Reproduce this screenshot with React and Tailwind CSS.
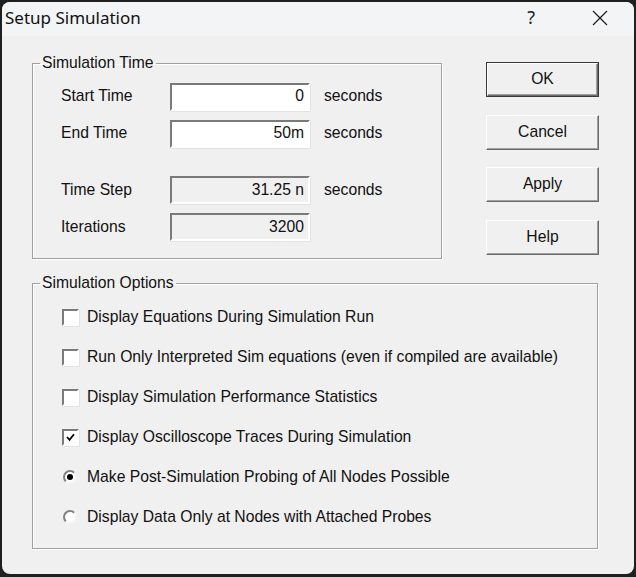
import React from 'react';

// Classic Win32 "Setup Simulation" dialog

const sunken =
  'border-2 border-t-[#7a7a7a] border-l-[#7a7a7a] border-r-[#ffffff] border-b-[#ffffff] shadow-[1px_1px_0_#e3e3e3]';

function Field({ label, value, unit, readOnly }) {
  const shift = readOnly ? '' : '-mt-[2px]';
  return (
    <div className="flex items-center h-[28px]">
      <span className={`w-[109px] ${shift}`}>{label}</span>
      <div
        className={`w-[140px] h-[28px] flex items-center justify-end pr-[4px] ${sunken} ${
          readOnly ? 'bg-[#f0f0f0]' : 'bg-white'
        }`}
      >
        <span className={shift}>{value}</span>
      </div>
      {unit && <span className={`ml-[14px] ${shift}`}>{unit}</span>}
    </div>
  );
}

function Button({ children, isDefault, className = '' }) {
  return (
    <div
      className={`w-[113px] h-[35px] ${
        isDefault ? 'border border-[#3a3a3a]' : ''
      } ${className}`}
    >
      <div className="w-full h-full flex items-center justify-center border border-t-white border-l-white border-r-[#696969] border-b-[#696969] shadow-[inset_-1px_-1px_0_#a0a0a0] bg-[#f0f0f0]">
        <span className="-mt-[1px]">{children}</span>
      </div>
    </div>
  );
}

function Group({ title, className = '', children }) {
  return (
    <fieldset
      className={`border border-[#a0a0a0] pl-[7px] shadow-[1px_1px_0_#ffffff,inset_1px_1px_0_#ffffff] ${className}`}
    >
      <legend className="px-[2px] leading-[20px]">{title}</legend>
      {children}
    </fieldset>
  );
}

function CheckBox({ checked }) {
  return (
    <div className="w-[18px] flex justify-center">
      <div className={`w-[17px] h-[17px] bg-white flex items-center justify-center ${sunken}`}>
        {checked && (
          <svg width="9" height="9" viewBox="0 0 9 9">
            <path d="M1 4 L3.5 6.8 L8 1.2" fill="none" stroke="#000" strokeWidth="1.8" />
          </svg>
        )}
      </div>
    </div>
  );
}

function Radio({ checked }) {
  return (
    <div className="w-[18px] flex justify-center">
      <div className="w-[14px] h-[14px] rounded-full bg-white flex items-center justify-center border-2 border-t-[#808080] border-l-[#808080] border-r-[#f4f4f4] border-b-[#f4f4f4]">
        {checked && <div className="w-[6px] h-[6px] rounded-full bg-black" />}
      </div>
    </div>
  );
}

const options = [
  { kind: 'check', checked: false, label: 'Display Equations During Simulation Run' },
  { kind: 'check', checked: false, label: 'Run Only Interpreted Sim equations (even if compiled are available)' },
  { kind: 'check', checked: false, label: 'Display Simulation Performance Statistics' },
  { kind: 'check', checked: true, label: 'Display Oscilloscope Traces During Simulation' },
  { kind: 'radio', checked: true, label: 'Make Post-Simulation Probing of All Nodes Possible' },
  { kind: 'radio', checked: false, label: 'Display Data Only at Nodes with Attached Probes' },
];

export default function App() {
  return (
    <div className="w-[636px] h-[577px] bg-[#1f1f1f] pt-[2px] px-[2px] pb-[3px]">
      <div className="h-full rounded-[8px] overflow-hidden bg-[#f0f0f0] flex flex-col text-[15.7px] text-[#111] font-['Liberation_Sans',Arial,sans-serif]">
        {/* Title bar */}
        <div className="h-[34px] shrink-0 bg-[#f2f4f5] flex items-center">
          <span className="ml-[3px] text-[17px] font-['Noto_Sans',sans-serif] -mt-[2px]">
            Setup Simulation
          </span>
          <span className="ml-auto text-[18px] font-['Noto_Sans',sans-serif] -mt-[3px] text-[#222]">?</span>
          <div className="w-[16px] h-[16px] ml-[57px] mr-[26px] -mt-[2px]">
            <svg width="16" height="16" viewBox="0 0 16 16">
              <path d="M1 1 L15 15 M15 1 L1 15" stroke="#1a1a1a" strokeWidth="1.2" />
            </svg>
          </div>
        </div>

        {/* Body */}
        <div className="flex pl-[30px] pt-[17px]">
          <Group title="Simulation Time" className="w-[410px] h-[206px]">
            <div className="pl-[21px] pt-[10px] flex flex-col">
              <Field label="Start Time" value="0" unit="seconds" />
              <div className="h-[9px]" />
              <Field label="End Time" value="50m" unit="seconds" />
              <div className="h-[28px]" />
              <Field label="Time Step" value="31.25 n" unit="seconds" readOnly />
              <div className="h-[9px]" />
              <Field label="Iterations" value="3200" readOnly />
            </div>
          </Group>

          <div className="flex flex-col ml-[44px] pt-[9px]">
            <Button isDefault>OK</Button>
            <Button className="mt-[18px]">Cancel</Button>
            <Button className="mt-[17px]">Apply</Button>
            <Button className="mt-[18px]">Help</Button>
          </div>
        </div>

        <div className="pl-[30px] pt-[14px]">
          <Group title="Simulation Options" className="w-[566px] h-[276px]">
            <div className="pl-[21px] pt-[14px] flex flex-col gap-[20px]">
              {options.map((o) => (
                <div key={o.label} className="flex items-center h-[20px]">
                  {o.kind === 'check' ? <CheckBox checked={o.checked} /> : <Radio checked={o.checked} />}
                  <span className="ml-[8px]">{o.label}</span>
                </div>
              ))}
            </div>
          </Group>
        </div>
      </div>
    </div>
  );
}
